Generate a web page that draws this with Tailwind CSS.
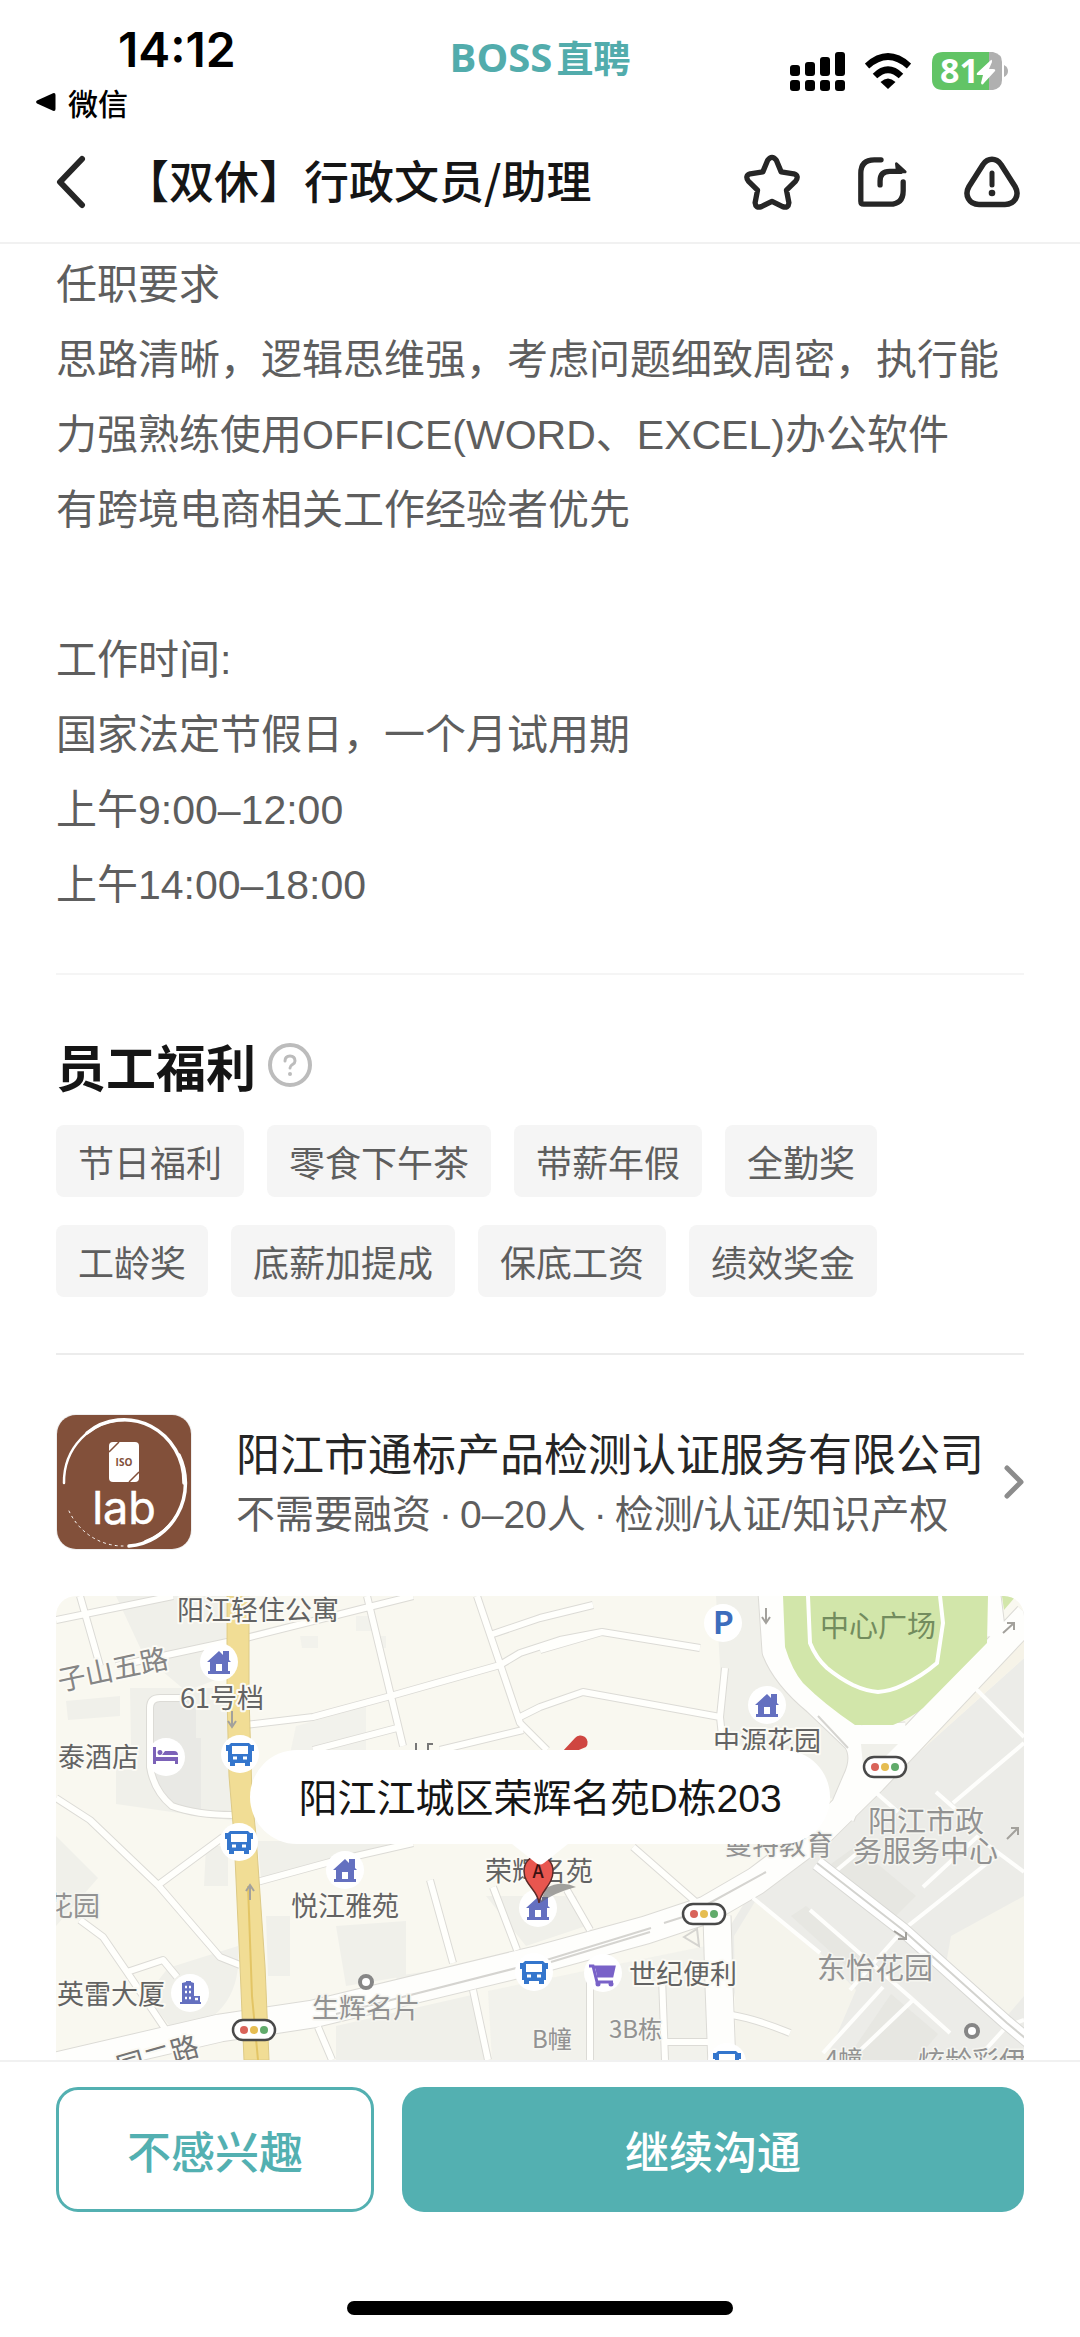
<!DOCTYPE html>
<html lang="zh-CN">

<head>
    <meta charset="UTF-8">
    <title>行政文员/助理</title>
    <meta name="viewport" content="width=device-width, initial-scale=1.0">
    <script src="https://cdn.jsdelivr.net/npm/@tailwindcss/browser@4"></script>
</head>

<body class="min-h-screen flex flex-col bg-white text-[#5e5e5e] font-['Noto_Sans_CJK_SC',sans-serif]">
    <!-- Status bar -->
    <div class="h-[122px] grid grid-cols-3 px-9 text-black">
        <div class="pt-5">
            <div class="pl-[82px] text-[48px] leading-[60px] font-semibold font-['Inter',sans-serif]">14:12</div>
            <a href="#" class="flex items-center gap-3 text-[30px] leading-[44px] font-medium">
                <svg class="w-5 h-5" viewBox="0 0 20 20" fill="currentColor">
                    <path d="M1 8.500 17 1.200Q19.500 .5 19.500 3V17Q19.500 19.500 17 18.800L1 11.500Q-.8 10 1 8.500Z" />
                </svg>
                微信
            </a>
        </div>
        <div class="pt-8 flex items-start justify-center gap-1 text-[#52acac] font-bold leading-[50px]">
            <span class="text-[40px] font-['Open_Sans',sans-serif]">BOSS</span>
            <span class="text-[37px]">直聘</span>
        </div>
        <div class="pt-[50px] pr-9 flex items-start justify-end gap-5">
            <svg class="w-[55px] h-[42px]" viewBox="0 0 55 42" fill="currentColor">
                <rect x="0" y="15" width="10" height="11" rx="3" />
                <rect x="15" y="12" width="10" height="14" rx="3" />
                <rect x="30" y="7" width="10" height="19" rx="3" />
                <rect x="45" y="2" width="10" height="24" rx="3" />
                <rect x="0" y="30" width="10" height="11" rx="3" />
                <rect x="15" y="30" width="10" height="11" rx="3" />
                <rect x="30" y="30" width="10" height="11" rx="3" />
                <rect x="45" y="30" width="10" height="11" rx="3" />
            </svg>
            <svg class="w-[46px] h-[42px]" viewBox="0 0 46 42" fill="none" stroke="currentColor" stroke-width="6.500">
                <path d="M2 16Q23 -3 44 16" />
                <path d="M10 26Q23 13.500 36 26" />
                <path d="M23 39 15.500 32Q23 25 30.500 32Z" fill="currentColor" stroke="none" />
            </svg>
            <svg class="w-[77px] h-[42px]" viewBox="0 0 77 42">
                <path d="M58 2V40H62Q71 38 71 30V12Q71 4 62 2Z" fill="#b0b0b0" />
                <path d="M12 2H58V40H12Q1 40 1 29V13Q1 2 12 2Z" fill="#62c466" />
                <path d="M73 15Q77 17 77 21T73 27Z" fill="#b0b0b0" />
                <text x="9" y="33" font-size="34" font-weight="700" fill="#fff" font-family="Open Sans, sans-serif">81</text>
                <path d="M60 10 46 23Q45 25 47 25H52L50 33Q51 36 53 33L64 21Q65 19 62 19H58L61 12Q61 9 60 10Z" fill="#fff" />
            </svg>
        </div>
    </div>

    <!-- Title bar -->
    <header class="h-[122px] px-14 flex items-center border-b-2 border-[#f1f1f1] text-[#262626]">
        <button type="button" aria-label="返回" class="w-[68px]">
            <svg class="w-[30px] h-[54px]" viewBox="0 0 30 54" fill="none" stroke="currentColor" stroke-width="6"
                stroke-linecap="round" stroke-linejoin="round">
                <path d="M26 4 4 27 26 50" />
            </svg>
        </button>
        <h1 class="flex-1 text-[45px] leading-[60px] pb-1 font-medium text-[#151515]">【双休】行政文员/助理</h1>
        <div class="pr-1 flex items-center gap-14">
            <button type="button" aria-label="收藏">
                <svg class="w-14 h-14" viewBox="0 0 58 58" fill="none" stroke="currentColor" stroke-width="5.500"
                    stroke-linejoin="round">
                    <path d="M24.500 6.500Q29 .5 33.500 6.500L38.500 18.500 51.500 20.500Q57.500 22.500 53.500 28L44 37.500 46.500 50.500Q46 56.500 40 54.500L29 49 18 54.500Q12 56.500 11.500 50.500L14 37.500 4.500 28Q.5 22.500 6.500 20.500L19.500 18.500Z" />
                </svg>
            </button>
            <button type="button" aria-label="分享">
                <svg class="w-[52px] h-[52px]" viewBox="0 0 54 54" fill="none" stroke="currentColor" stroke-width="5.500"
                    stroke-linecap="round" stroke-linejoin="round">
                    <path d="M26 4H19Q5 4 5 18V47Q5 50 8 50H35Q49 50 49 36V27" />
                    <path d="M25 30V26Q25 16 35 16H46" />
                    <path d="M42 8 51 16.500H43Z" fill="currentColor" stroke-width="3" />
                </svg>
            </button>
            <button type="button" aria-label="举报">
                <svg class="w-14 h-[52px]" viewBox="0 0 56 52" fill="none" stroke="currentColor" stroke-width="5.500"
                    stroke-linecap="round" stroke-linejoin="round">
                    <path d="M19 8.500C24 1.500 32 1.500 37 8.500L51 30.500C56 39 51 48.500 41 48.500H15C5 48.500 0 39 5 30.500Z" />
                    <path d="M28 17V29" stroke-width="5" />
                    <circle cx="28" cy="37" r="3.300" fill="currentColor" stroke="none" />
                </svg>
            </button>
        </div>
    </header>

    <main class="px-14 flex-1">
        <!-- Job description -->
        <section class="pt-1 pb-[50px] border-b-2 border-[#f5f5f5] text-[41px] leading-[75px] font-['Liberation_Sans','Noto_Sans_CJK_SC',sans-serif]">
            <p>任职要求</p>
            <p>思路清晰，逻辑思维强，考虑问题细致周密，执行能力强熟练使用OFFICE(WORD、EXCEL)办公软件</p>
            <p>有跨境电商相关工作经验者优先</p>
            <br>
            <p>工作时间:</p>
            <p>国家法定节假日，一个月试用期</p>
            <p>上午9:00–12:00</p>
            <p>上午14:00–18:00</p>
        </section>

        <!-- Benefits -->
        <section class="pt-[58px] pb-14 border-b-2 border-[#ececec]">
            <div class="flex items-center gap-3">
                <h2 class="text-[50px] leading-[64px] font-bold text-[#151515]">员工福利</h2>
                <button type="button" aria-label="福利说明">
                    <svg class="w-11 h-11" viewBox="0 0 44 44" fill="none" stroke="#bcbcbc" stroke-width="4"
                        stroke-linecap="round">
                        <circle cx="22" cy="22" r="20" />
                        <path d="M17 18Q17 13 22 13T27 18C27 22 22 21 22 25" stroke-width="3" />
                        <circle cx="22" cy="31" r="2" fill="#bcbcbc" stroke="none" />
                    </svg>
                </button>
            </div>
            <ul class="pt-7 flex flex-wrap gap-x-[23px] gap-y-7 pr-20 text-[36px] leading-[72px]">
                <li class="px-[22px] rounded-lg bg-[#f5f5f5]">节日福利</li>
                <li class="px-[22px] rounded-lg bg-[#f5f5f5]">零食下午茶</li>
                <li class="px-[22px] rounded-lg bg-[#f5f5f5]">带薪年假</li>
                <li class="px-[22px] rounded-lg bg-[#f5f5f5]">全勤奖</li>
                <li class="px-[22px] rounded-lg bg-[#f5f5f5]">工龄奖</li>
                <li class="px-[22px] rounded-lg bg-[#f5f5f5]">底薪加提成</li>
                <li class="px-[22px] rounded-lg bg-[#f5f5f5]">保底工资</li>
                <li class="px-[22px] rounded-lg bg-[#f5f5f5]">绩效奖金</li>
            </ul>
        </section>

        <!-- Company -->
        <a href="#" class="pt-[59px] pb-[46px] flex items-center">
            <svg class="w-[136px] h-[136px] mr-11 rounded-[20px] border border-[#eee]" viewBox="0 0 134 134">
                <rect width="134" height="134" fill="#82503a" />
                <g fill="none" stroke="#fff" stroke-linecap="round">
                    <path d="M7 68A60 62 0 0 1 67 5" stroke-width="2.500" />
                    <path d="M30 18A60 62 0 0 1 127 68" stroke-width="3.500" />
                    <path d="M122 40A61 63 0 0 1 72 131" stroke-width="3.500" />
                    <path d="M128 60A64 62 0 0 1 88 126" stroke-width="1.500" />
                    <path d="M12 96A60 62 0 0 0 66 131" stroke-width="1" stroke-dasharray="2 4" />
                </g>
                <rect x="52" y="27" width="30" height="40" rx="4" fill="#fff" />
                <path d="M52 37 62 27M72 67 82 57" stroke="#82503a" stroke-width="1.500" />
                <text x="67" y="51" text-anchor="middle" font-size="10" font-weight="700" fill="#82503a"
                    font-family="Open Sans, sans-serif">ISO</text>
                <text x="67" y="109" text-anchor="middle" font-size="45" fill="#fff" stroke="#fff" stroke-width=".5"
                    font-family="Inter, sans-serif">lab</text>
            </svg>
            <div class="flex-1 pt-1.5 whitespace-nowrap font-['Liberation_Sans','Noto_Sans_CJK_SC',sans-serif]">
                <div class="text-[44px] leading-[60px] text-[#262626]">阳江市通标产品检测认证服务有限公司</div>
                <div class="text-[39px] leading-[58px]">不需要融资<span class="mx-2">·</span>0–20人<span class="mx-2">·</span>检测/认证/知识产权</div>
            </div>
            <svg class="w-5 h-9 shrink-0" viewBox="0 0 20 36" fill="none" stroke="#8c8c8c" stroke-width="5"
                stroke-linecap="round" stroke-linejoin="round">
                <path d="M3 4 17 18 3 32" />
            </svg>
        </a>

        <!-- Map -->
        <section class="relative rounded-t-[20px] overflow-hidden">
            <svg class="block w-full h-[464px]" viewBox="0 0 968 464" preserveAspectRatio="xMidYMid slice"
                font-family="Noto Sans CJK SC, sans-serif">
                <defs>
                    <g id="house">
                        <circle r="19" fill="#fff" />
                        <path d="M-12 0 0 -11 4 -7V-11H10V-2L12 0H9V9H11V12H-11V9H-9V0ZM-3 9H3V2H-3Z" fill="#6470c0" fill-rule="evenodd" />
                    </g>
                    <g id="bus">
                        <circle r="19" fill="#fff" />
                        <path d="M-9 -11H9L11 -9H14V-3H12V8H10V12H5V9H-5V12H-10V8H-12V-3H-14V-9H-11ZM-8 -8V0H8V-8Z" fill="#3476cd" fill-rule="evenodd" />
                        <path d="M-7 4H-3M3 4H7" stroke="#fff" stroke-width="3" />
                    </g>
                    <g id="light">
                        <rect x="-21" y="-10" width="42" height="20" rx="10" fill="#fff" stroke="#494949" stroke-width="2.500" />
                        <circle cx="-10" r="4" fill="#d9635a" />
                        <circle r="4" fill="#e6bd52" />
                        <circle cx="10" r="4" fill="#61ab6b" />
                    </g>
                    <g id="roads" fill="none" stroke-linejoin="round">
                        <path d="M0 24 117 0M24 0 44 70M60 70 190 42 309 12 357 0M311 0 347 150M421 0 464 127 491 154M189 129 257 121 331 101 444 69 464 57 504 44 546 36M434 39 484 22 537 9M464 121 484 111 527 96 664 121 669 72M664 121 667 150M484 54 546 36 644 52M257 154 341 132M384 154 467 134" />
                        <path d="M131 102H104Q94 102 94 112V171Q98 195 116 210 140 219 177 219M0 202 34 224 102 289 164 361 184 369M102 289 167 241M24 324 47 341 71 376 114 440M71 376 107 364 121 381M201 286 274 266 357 247" />
                        <path d="M577 251 641 307M511 294 534 334M374 284 397 367M437 291 461 354M417 394 432 464M262 431 276 464M534 384V464M606 381 609 464M607 446H654M676 419Q700 423 734 437" />
                    </g>
                    <g id="highways" fill="none" stroke-linejoin="round">
                        <path d="M-4 471 164 432 257 418 484 363 590 334 650 314 700 285 760 240 817 184 972 20M716 -4 720 55Q730 80 760 105L800 143Q812 160 800 185L785 220M800 143 850 140M661 320 663 390 666 470M931 0 936 40" />
                    </g>
                </defs>

                <rect width="968" height="464" fill="#f9f8f0" />
                <!-- Blocks -->
                <g fill="#f0f0ea">
                    <path d="M60 0H170V80L130 95 88 60ZM74 92H180V225L130 218 60 208V160L75 150ZM10 105 64 100V120L12 124Z" />
                    <path d="M660 0H705Q708 60 740 100L800 150 805 180 780 205 668 140ZM201 245H340L300 262 205 282ZM150 250H172V290H148ZM210 320H234V380H212Z" />
                    <path d="M112 372 182 350Q188 420 120 438L90 400ZM0 240 42 282 0 330ZM430 300H520L530 330 470 350ZM280 330 350 325V380L290 390ZM340 380 440 365V380L345 400ZM280 430 420 398 430 464H280Z" />
                    <path d="M432 395 650 350 656 464H436ZM244 40H262V52H246ZM300 20H318V35H300ZM318 40H330V52H320ZM240 130 310 110V200H225Z" opacity=".7" />
                </g>
                <path d="M95 103H140V142H145V215L116 208 95 175Z" fill="#e9e9e5" />
                <path d="M968 62 812 202 700 288 668 340 690 464H968Z" fill="#ececE8" />
                <path d="M678 340 700 304 764 357 800 394 770 464H680ZM895 340 968 300V400L951 420 890 368Z" fill="#f5f4ec" />
                <path d="M930 80 968 42V62L812 202 790 220Z" fill="#f6f3e8" />
                <path d="M800 250 860 300 840 320 775 268ZM735 320 750 310 825 372 806 384ZM835 398 882 438 860 464H790Z" fill="#e7e7e2" />
                <!-- Roads -->
                <use href="#roads" stroke="#dcdbd6" stroke-width="8" />
                <use href="#highways" stroke="#dcdbd6" stroke-width="29" />
                <use href="#roads" stroke="#fffffc" stroke-width="6" />
                <use href="#highways" stroke="#fefefc" stroke-width="27" />
                <g fill="none" stroke="#fefefc" stroke-width="4">
                    <path d="M914 87 968 141M817 194 842 216M968 147 897 207M880 196 905 218M944 257 847 334 794 394M781 274 817 244M867 291 921 241 968 276M697 302 764 357M754 314 854 401 894 437M857 404 794 464M827 391 767 457M920 464 951 430 968 424" />
                </g>
                <path d="M761 267 847 334 951 427 975 447" fill="none" stroke="#d8d8d4" stroke-width="15" />
                <path d="M761 267 847 334 951 427 975 447" fill="none" stroke="#fff" stroke-width="13" />
                <path d="M761 267 847 334 951 427 975 447" fill="none" stroke="#d3d3cf" stroke-width="2" />
                <path d="M280 418 484 366 595 332M608 327 630 320M495 366 594 336M650 309 710 276M762 120 792 152M628 341 641 333 643 350Z" fill="none" stroke="#d5d4d0" stroke-width="2" />
                <path d="M805 148H842L820 170H807Z" fill="#f0f0ea" />
                <path d="M727 0 729 51Q736 74 747 87 768 108 799 129H837Q855 122 867 112L931 47 932 0ZM946 0H960L948 14Z" fill="#d2e6aa" />
                <path d="M752 0 754 47Q760 62 771 72 783 82 797 89 810 95 822 96 835 95 847 89 866 80 881 67L887 27 884 0" fill="none" stroke="#fff" stroke-width="4" />
                <path d="M171 0V100L173 180 178 240 184 370 188 464H213L209 370 200 240 196 200 193 100V0Z" fill="#f1dd95" stroke="#ddca86" stroke-width="1" />
                <path d="M192 290 196 400 202 464" fill="none" stroke="#e3c565" stroke-width="2" />
                <g fill="none" stroke="#a3a19c" stroke-width="2">
                    <path d="M176 115V130M172 125 176 131 180 125M194 304V289M190 295 194 289 198 295M710 12V27M706 21 710 27 714 21M947 37 958 27M951 27H958V34M838 335 850 343M842 343H850V336M951 243 962 232M955 232H962V239" />
                </g>

                <!-- Place markers -->
                <use href="#house" x="163" y="66" />
                <use href="#house" x="289" y="274" />
                <use href="#house" x="482" y="312" />
                <use href="#house" x="711" y="109" />
                <use href="#bus" x="184" y="158" />
                <use href="#bus" x="183" y="246" />
                <use href="#bus" x="478" y="376" />
                <use href="#bus" x="671" y="466" />
                <use href="#light" x="829" y="171" />
                <use href="#light" x="198" y="434" />
                <use href="#light" x="648" y="318" />
                <circle cx="110" cy="161" r="19" fill="#fff" />
                <path d="M97 151H100V161H122V168H119V165H100V168H97ZM104 154A2.500 2.500 0 1 1 103.900 154ZM109 155H118Q122 155 122 159H106Z" fill="#7c62b8" />
                <circle cx="134" cy="397" r="19" fill="#fff" />
                <path d="M126 387 130 386V385H135V386L138 387V400H144V406H145V408H124V406H126Z" fill="#6470c0" />
                <path d="M129 391H131M133 391H135M129 396H131M133 396H135M129 402H131M133 402H135M139 403H142" stroke="#fff" stroke-width="2.500" />
                <circle cx="667" cy="27" r="19" fill="#fff" />
                <text x="657" y="38" font-size="31" font-weight="700" fill="#3d6dbd">P</text>
                <circle cx="547" cy="377" r="19" fill="#fff" />
                <path d="M533 370H537L541 386H557M538 371H558L556 380H541" fill="none" stroke="#7962c8" stroke-width="3" />
                <path d="M539 371H558L556 380H541Z" fill="#7962c8" />
                <circle cx="542" cy="388" r="2.500" fill="#7962c8" />
                <circle cx="555" cy="388" r="2.500" fill="#7962c8" />
                <g fill="#fff" stroke="#868686" stroke-width="4">
                    <circle cx="310" cy="386" r="6" />
                    <circle cx="916" cy="435" r="6" />
                </g>
                <path d="M506 156 519 142A7 7 0 1 1 530 151L518 156Z" fill="#cf4640" />
                <path d="M360 147V154M371 148H377M372 148V154" stroke="#777" stroke-width="2" />

                <!-- Place names -->
                <g font-size="27" fill="#636363" stroke="#fbfaf4" stroke-width="4" paint-order="stroke" stroke-linejoin="round">
                    <text x="121" y="24">阳江轻住公寓</text>
                    <text x="124" y="112">61号档</text>
                    <text x="2" y="171">泰酒店</text>
                    <text x="657" y="155">中源花园</text>
                    <text x="429" y="285">荣辉名苑</text>
                    <text x="235" y="320">悦江雅苑</text>
                    <text x="1" y="408">英雷大厦</text>
                    <text x="573" y="388">世纪便利</text>
                    <text x="4" y="95" font-size="28" fill="#858585" transform="rotate(-12 4 95)">子山五路</text>
                    <text x="64" y="482" font-size="28" fill="#747474" transform="rotate(-16 64 482)">园二路</text>
                </g>
                <g font-size="27" fill="#929292" stroke="#f5f5f0" stroke-width="3" paint-order="stroke" stroke-linejoin="round">
                    <text x="-10" y="320">花园</text>
                    <text x="256" y="422">生辉名片</text>
                    <text x="669" y="259">曼特教育</text>
                    <text x="476" y="452" font-size="24">B幢</text>
                    <text x="553" y="442" font-size="24">3B栋</text>
                    <text x="769" y="472" font-size="24">4幢</text>
                    <text x="862" y="475">炫龄彩伊</text>
                    <text x="812" y="236" font-size="29">阳江市政</text>
                    <text x="797" y="266" font-size="29">务服务中心</text>
                    <text x="761" y="383" font-size="29">东怡花园</text>
                </g>
                <text x="764" y="41" font-size="29" fill="#738c5e">中心广场</text>

                <!-- Location pin -->
                <path d="M484 307 490 292Q505 284 520 291 500 296 484 307Z" fill="#666" opacity=".6" />
                <path d="M483 307C482 294 468 289 468 275A14 15 0 0 1 497 275C497 289 485 294 483 307Z" fill="#e8564f" stroke="#5c2a28" stroke-width="1.500" />
                <text x="482" y="282" text-anchor="middle" font-size="18" font-weight="500" fill="#3a1212">A</text>
            </svg>
            <div class="absolute top-[154px] inset-x-0 flex flex-col items-center">
                <div class="px-12 pt-1 rounded-full bg-white text-[39px] leading-[90px] text-[#151515] font-['Liberation_Sans','Noto_Sans_CJK_SC',sans-serif]">阳江江城区荣辉名苑D栋203</div>
                <svg class="w-14 h-[22px]" viewBox="0 0 56 22" fill="#fff">
                    <path d="M0 0H56L32 19Q28 22 24 19Z" />
                </svg>
            </div>
        </section>
    </main>

    <!-- Actions -->
    <footer class="px-14 pt-[25px] pb-[22px] border-t-2 border-[#f1f1f1] bg-white">
        <div class="flex gap-7 text-[44px] leading-[60px] font-medium">
            <button type="button" class="w-[318px] h-[125px] rounded-[22px] border-3 border-[#53b0b1] text-[#53b0b1]">不感兴趣</button>
            <button type="button" class="flex-1 h-[125px] rounded-[22px] bg-[#53b0b1] text-white">继续沟通</button>
        </div>
        <div class="mt-[89px] mx-auto w-[386px] h-3.5 rounded-full bg-black"></div>
    </footer>
</body>

</html>
